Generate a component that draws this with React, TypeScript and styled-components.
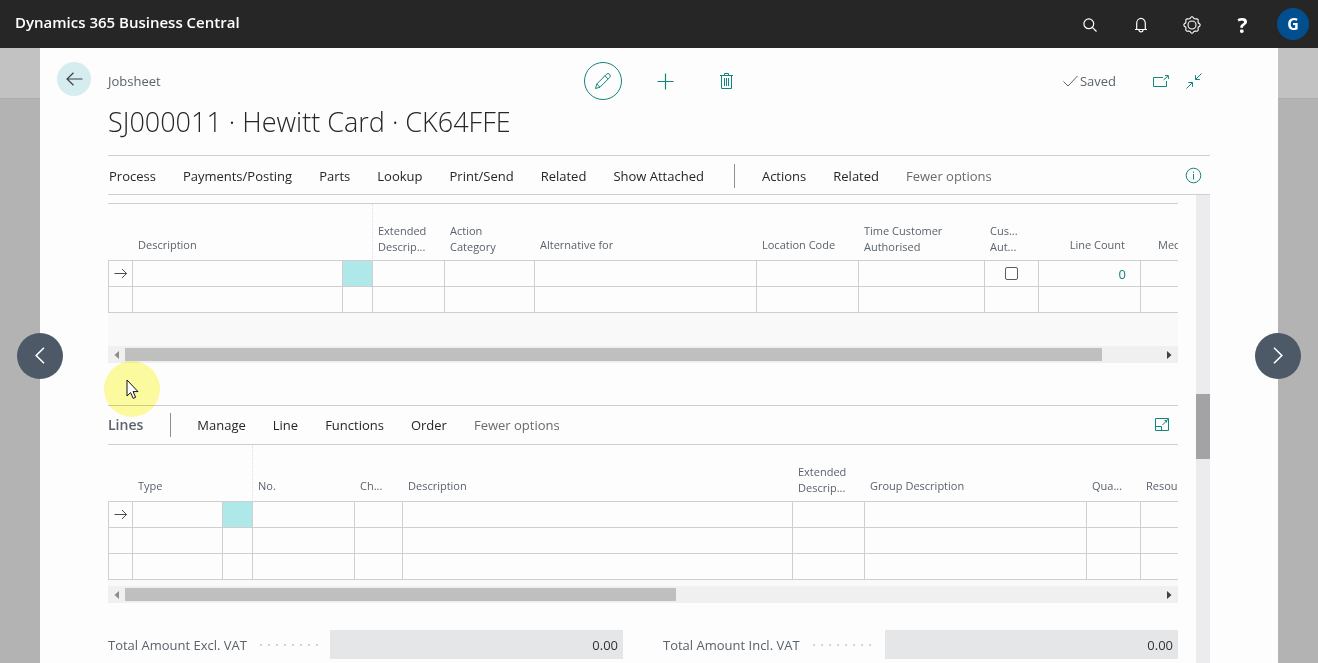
import React from "react";
import styled, { createGlobalStyle } from "styled-components";

const teal = "#12857c";
const rule = "#cfcfcf";
const slate = "#5a626b";

const GlobalStyle = createGlobalStyle`
  *, *::before, *::after { box-sizing: border-box; }
  body {
    margin: 0;
    font-family: "Open Sans", "Noto Sans", sans-serif;
    font-size: 13px;
    color: #262626;
  }
  button { font: inherit; color: inherit; background: none; border: 0; padding: 0; cursor: pointer; }
  svg { display: block; }
`;

const Page = styled.div`
  min-height: 100vh;
  display: flex;
  flex-direction: column;
`;

const TopBar = styled.header`
  height: 48px;
  flex: none;
  display: flex;
  align-items: center;
  padding: 0 9px 0 15px;
  background: #262626;
  color: #fff;
`;

const Brand = styled.div`
  flex: 1;
  font-size: 15px;
  font-weight: 600;
  line-height: 20px;
  padding-bottom: 4px;
`;

const TopButton = styled.button`
  width: 51px;
  height: 48px;
  padding-top: 2px;
  display: flex;
  align-items: center;
  justify-content: center;
  font-size: 21px;
  font-weight: 700;
`;

const Avatar = styled.button`
  width: 32px;
  height: 32px;
  margin-left: 9px;
  border-radius: 50%;
  background: #024f8f;
  font-size: 16px;
  font-weight: 700;
`;

const Stage = styled.div`
  flex: 1;
  position: relative;
  display: flex;
  padding: 0 40px;
  background: linear-gradient(#c2c2c2 0 50px, #adadad 50px 51px, #b3b3b3 51px);
`;

const Sheet = styled.main`
  flex: 1;
  min-width: 0;
  display: flex;
  flex-direction: column;
  padding: 14px 68px 0;
  background: #fdfdfd;
`;

const PageButton = styled.button<{ $side: "left" | "right" }>`
  position: absolute;
  top: calc(50% - 23px);
  ${(p) => p.$side}: 17px;
  width: 46px;
  height: 46px;
  display: flex;
  align-items: center;
  justify-content: center;
  border-radius: 50%;
  background: #4d5967;
  color: #fff;
`;

const HeadRow = styled.div`
  display: grid;
  grid-template-columns: 1fr auto 1fr;
  align-items: center;
  height: 38px;
`;

const Crumb = styled.div`
  display: flex;
  align-items: center;
  gap: 17px;
  margin-left: -51px;
  color: ${slate};
`;

const BackButton = styled.button`
  width: 34px;
  height: 34px;
  margin-bottom: 4px;
  display: flex;
  align-items: center;
  justify-content: center;
  border-radius: 50%;
  background: #d5edef;
  color: #3c4248;
`;

const Tools = styled.div`
  display: flex;
  align-items: center;
  gap: 24px;
  color: ${teal};
`;

const Tool = styled.button<{ $ring?: boolean; $end?: boolean }>`
  width: ${(p) => (p.$end ? 26 : 38)}px;
  height: 38px;
  display: flex;
  align-items: center;
  justify-content: ${(p) => (p.$end ? "flex-end" : "center")};
  border: ${(p) => (p.$ring ? `1px solid ${teal}` : "0")};
  border-radius: ${(p) => (p.$ring ? "50%" : "0")};
`;

const Status = styled.div`
  display: flex;
  align-items: center;
  justify-content: flex-end;
  padding-right: 8px;
  color: ${slate};
`;

const Saved = styled.span`
  display: flex;
  align-items: center;
  gap: 2px;
  margin-right: 20px;
`;

const IconButton = styled.button`
  color: ${teal};
  margin-left: 17px;
`;

const Title = styled.h1`
  margin: 0 0 12px;
  font-size: 27px;
  font-weight: 300;
  line-height: 43px;
  color: #262626;
`;

const CommandBar = styled.nav`
  display: flex;
  align-items: center;
  flex: none;
  height: 40px;
  border-top: 1px solid ${rule};
  border-bottom: 1px solid ${rule};
`;

const Commands = styled.div`
  flex: 1;
  display: flex;
  align-items: center;
  gap: 27px;
  padding: 2px 0 0 1px;
`;

const Command = styled.button<{ $muted?: boolean }>`
  line-height: 20px;
  white-space: nowrap;
  color: ${(p) => (p.$muted ? "#6b6b6b" : "#262626")};
`;

const Divider = styled.span`
  width: 1px;
  height: 24px;
  margin-left: 3px;
  background: #8f8f8f;
`;

const Body = styled.div`
  flex: 1;
  display: flex;
  gap: 18px;
`;

const Column = styled.div`
  flex: 1;
  min-width: 0;
  padding-top: 8px;
`;

const ScrollTrack = styled.div`
  width: 14px;
  background: #ececee;
`;

const ScrollThumb = styled.div`
  height: 65px;
  margin-top: 199px;
  background: #a3a3a5;
`;

const Part = styled.section`
  position: relative;
`;

const TablePane = styled.div<{ $ruled?: boolean }>`
  overflow: hidden;
  border-top: ${(p) => (p.$ruled ? `1px solid ${rule}` : "0")};
`;

const Grid = styled.table`
  width: 1200px;
  table-layout: fixed;
  border-collapse: separate;
  border-spacing: 0;
`;

const HeadCell = styled.th<{ $wrapped?: boolean; $right?: boolean; $freeze?: boolean; $indent?: boolean }>`
  height: 57px;
  padding: 0 ${(p) => (p.$right ? 16 : 0)}px ${(p) => (p.$wrapped ? 5 : 7)}px ${(p) => (p.$indent ? 17 : 5)}px;
  vertical-align: bottom;
  text-align: ${(p) => (p.$right ? "right" : "left")};
  font-size: 11px;
  font-weight: 400;
  line-height: 16px;
  white-space: pre-line;
  color: ${slate};
  border-bottom: 1px solid ${rule};
  border-right: ${(p) => (p.$freeze ? "1px dotted #dcdce4" : "0")};
`;

const Cell = styled.td<{ $active?: boolean }>`
  height: 26px;
  padding: 0;
  border-right: 1px solid ${rule};
  border-bottom: 1px solid ${rule};
  background: ${(p) => (p.$active ? "#aee8e8" : "transparent")};
  &:first-child { border-left: 1px solid ${rule}; }
`;

const CellContent = styled.div<{ $right?: boolean }>`
  display: flex;
  align-items: center;
  justify-content: ${(p) => (p.$right ? "flex-end" : "center")};
  padding-right: ${(p) => (p.$right ? 14 : 0)}px;
  line-height: 20px;
  color: ${(p) => (p.$right ? teal : "#4a4f55")};
`;

const Tick = styled.input`
  appearance: none;
  width: 13px;
  height: 13px;
  margin: 0;
  border: 1px solid #5c5c5c;
  border-radius: 2px;
  background: #fff;
`;

const Filler = styled.div<{ $tall?: boolean }>`
  height: ${(p) => (p.$tall ? 33 : 6)}px;
  background: #f9f9fa;
`;

const HTrack = styled.div`
  display: flex;
  align-items: center;
  height: 17px;
  background: #f0f0f1;
`;

const Arrow = styled.button<{ $dark?: boolean }>`
  width: 17px;
  display: flex;
  justify-content: center;
  color: ${(p) => (p.$dark ? "#404040" : "#8c8c8c")};
`;

const HRun = styled.div`
  flex: 1;
`;

const HThumb = styled.div`
  height: 13px;
  background: #bfbfbf;
`;

const LinesBar = styled.div`
  display: flex;
  align-items: center;
  height: 40px;
  margin-top: 42px;
  padding-right: 8px;
  border-top: 1px solid ${rule};
  border-bottom: 1px solid ${rule};
`;

const LinesTitle = styled.h2`
  margin: 0 24px 0 0;
  font-size: 14px;
  font-weight: 600;
  line-height: 20px;
  color: ${slate};
`;

const LinesCommands = styled(Commands)`
  padding: 0 0 0 26px;
`;

const Totals = styled.div`
  display: grid;
  grid-template-columns: 1fr 1fr;
  gap: 40px;
  margin-top: 27px;
`;

const Total = styled.div`
  display: flex;
  align-items: center;
`;

const TotalLabel = styled.label`
  width: 222px;
  flex: none;
  display: flex;
  align-items: center;
  gap: 13px;
  white-space: nowrap;
  color: ${slate};
`;

const Leader = styled.span`
  width: 58px;
  height: 2px;
  background: repeating-linear-gradient(90deg, #d3d3d3 0 2px, transparent 2px 8px);
`;

const TotalField = styled.input`
  flex: 1;
  min-width: 0;
  height: 29px;
  padding: 0 5px;
  border: 0;
  background: #e5e6e7;
  font: inherit;
  color: #333;
  text-align: right;
`;

const Spotlight = styled.div`
  position: absolute;
  left: -4px;
  top: 158px;
  width: 56px;
  height: 56px;
  border-radius: 50%;
  background: #fdfca0;
  mix-blend-mode: multiply;
`;

const Pointer = styled.svg`
  position: absolute;
  left: 18px;
  top: 176px;
`;

type Col = { label?: string; width: number; right?: boolean; freeze?: boolean; indent?: boolean };

const jobColumns: Col[] = [
  { width: 25 },
  { label: "Description", width: 210 },
  { width: 30, freeze: true },
  { label: "Extended\nDescrip...", width: 72 },
  { label: "Action\nCategory", width: 90 },
  { label: "Alternative for", width: 222 },
  { label: "Location Code", width: 102 },
  { label: "Time Customer\nAuthorised", width: 126 },
  { label: "Cus...\nAut...", width: 54 },
  { label: "Line Count", width: 102, right: true },
  { label: "Mec", width: 167, indent: true },
];

const lineColumns: Col[] = [
  { width: 25 },
  { label: "Type", width: 90 },
  { width: 30, freeze: true },
  { label: "No.", width: 102 },
  { label: "Ch...", width: 48 },
  { label: "Description", width: 390 },
  { label: "Extended\nDescrip...", width: 72 },
  { label: "Group Description", width: 222 },
  { label: "Qua...", width: 54 },
  { label: "Resou", width: 167 },
];

const stroke = { fill: "none", stroke: "currentColor" } as const;

const RowArrow = () => (
  <svg width="14" height="12" {...stroke}>
    <path d="M0.5 5.5H13M8 1L12.5 5.5L8 10" />
  </svg>
);

function DataTable({ name, columns, rows, cells = {}, ruled }: {
  name: string; columns: Col[]; rows: number; cells?: Record<number, React.ReactNode>; ruled?: boolean;
}) {
  return (
    <TablePane $ruled={ruled}>
      <Grid aria-label={name}>
        <colgroup>{columns.map((c, i) => <col key={i} width={c.width} />)}</colgroup>
        <thead>
          <tr>
            {columns.map((c, i) => (
              <HeadCell key={i} $right={c.right} $freeze={c.freeze} $indent={c.indent} $wrapped={c.label?.includes("\n")}>
                {c.label}
              </HeadCell>
            ))}
          </tr>
        </thead>
        <tbody>
          {Array.from({ length: rows }, (_, r) => (
            <tr key={r}>
              {columns.map((c, i) => (
                <Cell key={i} $active={r === 0 && c.freeze}>
                  {r === 0 && i === 0 && <CellContent><RowArrow /></CellContent>}
                  {r === 0 && cells[i] && <CellContent $right={c.right}>{cells[i]}</CellContent>}
                </Cell>
              ))}
            </tr>
          ))}
        </tbody>
      </Grid>
    </TablePane>
  );
}

function HorizontalBar({ share }: { share: number }) {
  return (
    <HTrack>
      <Arrow aria-label="Scroll left"><svg width="5" height="8" fill="currentColor"><path d="M5 0V8L0.5 4z" /></svg></Arrow>
      <HRun><HThumb style={{ width: `${share}%` }} /></HRun>
      <Arrow $dark aria-label="Scroll right"><svg width="5" height="8" fill="currentColor"><path d="M0 0V8L4.5 4z" /></svg></Arrow>
    </HTrack>
  );
}

const gearPath = Array.from({ length: 64 }, (_, i) => {
  const a = (i / 64) * Math.PI * 2;
  const r = 7.4 + 0.7 * Math.tanh(2.2 * Math.cos(8 * a));
  return `${i ? "L" : "M"}${(9 + r * Math.cos(a)).toFixed(2)} ${(9 + r * Math.sin(a)).toFixed(2)}`;
}).join("") + "z";

export default function App() {
  return (
    <Page>
      <GlobalStyle />
      <TopBar>
        <Brand>Dynamics 365 Business Central</Brand>
        <TopButton aria-label="Search">
          <svg width="14" height="14" {...stroke} strokeWidth="1.2"><circle cx="5.8" cy="5.8" r="4.9" /><path d="M9.4 9.4L13.5 13.5" /></svg>
        </TopButton>
        <TopButton aria-label="Notifications">
          <svg width="14" height="16" {...stroke} strokeWidth="1.2"><path d="M1 12.5H13M2.7 12.5V6.2a4.3 4.8 0 0 1 8.6 0V12.5M5 13a2 1.8 0 0 0 4 0" /></svg>
        </TopButton>
        <TopButton aria-label="Settings">
          <svg width="18" height="18" {...stroke} strokeWidth="1.1"><path d={gearPath} /><circle cx="9" cy="9" r="4" /></svg>
        </TopButton>
        <TopButton aria-label="Help">?</TopButton>
        <Avatar>G</Avatar>
      </TopBar>
      <Stage>
        <Sheet>
          <HeadRow>
            <Crumb>
              <BackButton aria-label="Back">
                <svg width="17" height="14" {...stroke} strokeWidth="1.2"><path d="M16.5 7H1M7.5 0.8L1 7L7.5 13.2" /></svg>
              </BackButton>
              Jobsheet
            </Crumb>
            <Tools>
              <Tool $ring aria-label="Edit">
                <svg width="18" height="18" {...stroke}><path d="M1.5 16.5L2.8 12L12.4 2.3a2.2 2.2 0 0 1 3.2 3.2L6 15.2L1.5 16.5zM2.8 12L6 15.2M11 3.8L14.2 7" /></svg>
              </Tool>
              <Tool aria-label="New">
                <svg width="17" height="17" {...stroke} strokeWidth="1.2"><path d="M8.5 0.5V16.5M0.5 8.5H16.5" /></svg>
              </Tool>
              <Tool $end aria-label="Delete">
                <svg width="15" height="18" {...stroke}><path d="M1 3.5H14M5.5 3.5V1.5H9.5V3.5M2.5 3.5V16.5H12.5V3.5M5.5 6V14M7.5 6V14M9.5 6V14" /></svg>
              </Tool>
            </Tools>
            <Status>
              <Saved>
                <svg width="15" height="12" {...stroke}><path d="M0.5 6.5L5 11L14.5 1" /></svg>
                Saved
              </Saved>
              <IconButton aria-label="Open in new window">
                <svg width="16" height="13" {...stroke}><path d="M10 2.5H0.5V11.5H13.5V6M10.5 5L15 0.9M12 0.6H15.4V4" /></svg>
              </IconButton>
              <IconButton aria-label="Collapse">
                <svg width="16" height="16" {...stroke}><path d="M15.5 0.5L9.5 6.5M9.5 2.2V6.5H13.8M0.5 15.5L6.5 9.5M2.2 9.5H6.5V13.8" /></svg>
              </IconButton>
            </Status>
          </HeadRow>
          <Title>SJ000011 · Hewitt Card · CK64FFE</Title>
          <CommandBar>
            <Commands>
              {["Process", "Payments/Posting", "Parts", "Lookup", "Print/Send", "Related", "Show Attached"].map((t) => (
                <Command key={t}>{t}</Command>
              ))}
              <Divider />
              <Command>Actions</Command>
              <Command>Related</Command>
              <Command $muted>Fewer options</Command>
            </Commands>
            <Status>
              <IconButton aria-label="Details">
                <svg width="17" height="17" {...stroke}><circle cx="8.5" cy="8.5" r="7.3" /><path d="M8.5 7V12.5M8.5 4.5V5.8" /></svg>
              </IconButton>
            </Status>
          </CommandBar>
          <Body>
            <Column>
              <Part>
                <DataTable
                  name="Jobs"
                  ruled
                  columns={jobColumns}
                  rows={2}
                  cells={{ 8: <Tick type="checkbox" aria-label="Customer Authorised" />, 9: "0" }}
                />
                <Filler $tall />
                <HorizontalBar share={94.3} />
                <Spotlight />
                <Pointer width="13" height="21" viewBox="0 0 13 21">
                  <path d="M1 1V17L4.6 13.6L7.2 19.4L9.6 18.3L7.1 12.6H12z" fill="#fff" stroke="#111" />
                </Pointer>
              </Part>
              <LinesBar>
                <LinesTitle>Lines</LinesTitle>
                <Divider />
                <LinesCommands>
                  {["Manage", "Line", "Functions", "Order"].map((t) => <Command key={t}>{t}</Command>)}
                  <Command $muted>Fewer options</Command>
                </LinesCommands>
                <IconButton aria-label="Expand lines">
                  <svg width="16" height="14" {...stroke}><path d="M1.5 0.5H14.5V12.5H1.5zM1.5 8.5H7.5V12.5M8.5 7L14.5 0.8M10.5 2.5H12.5V4.5" /></svg>
                </IconButton>
              </LinesBar>
              <DataTable name="Lines" columns={lineColumns} rows={3} />
              <Filler />
              <HorizontalBar share={53.2} />
              <Totals>
                <Total>
                  <TotalLabel htmlFor="excl">Total Amount Excl. VAT<Leader /></TotalLabel>
                  <TotalField id="excl" readOnly value="0.00" />
                </Total>
                <Total>
                  <TotalLabel htmlFor="incl">Total Amount Incl. VAT<Leader /></TotalLabel>
                  <TotalField id="incl" readOnly value="0.00" />
                </Total>
              </Totals>
            </Column>
            <ScrollTrack><ScrollThumb /></ScrollTrack>
          </Body>
        </Sheet>
        <PageButton $side="left" aria-label="Previous">
          <svg width="10" height="17" {...stroke} strokeWidth="1.6"><path d="M9 0.8L1.2 8.5L9 16.2" /></svg>
        </PageButton>
        <PageButton $side="right" aria-label="Next">
          <svg width="10" height="17" {...stroke} strokeWidth="1.6"><path d="M1 0.8L8.8 8.5L1 16.2" /></svg>
        </PageButton>
      </Stage>
    </Page>
  );
}
